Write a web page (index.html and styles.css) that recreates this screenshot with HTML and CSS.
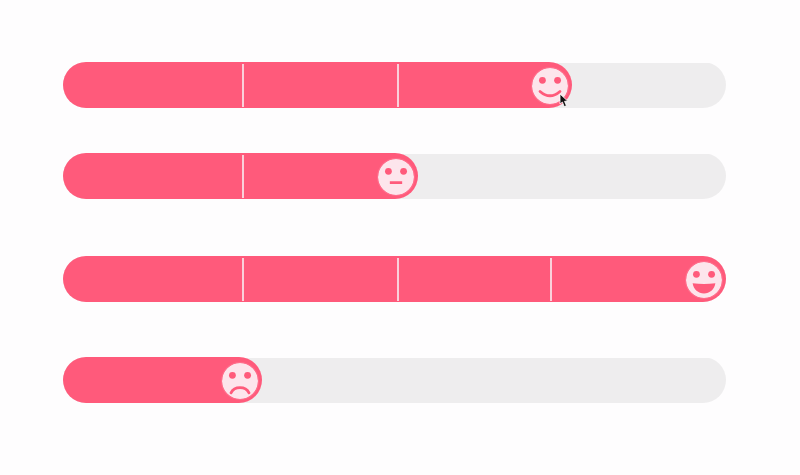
FILE: index.html
```html
<!DOCTYPE html>
<html lang="en">
<head>
    <meta charset="UTF-8">
    <title>Rating sliders</title>
    <link rel="stylesheet" href="styles.css">
</head>
<body>
    <div class="sliders">
        <div class="slider">
            <div class="fill" style="width: 509px">
                <span class="tick tick-1"></span>
                <span class="tick tick-2"></span>
                <svg class="face" viewBox="0 0 38 38">
                    <circle class="skin" cx="19" cy="19" r="19"/>
                    <circle class="eye" cx="11" cy="13" r="3.6"/>
                    <circle class="eye" cx="27" cy="13" r="3.6"/>
                    <path class="mouth" d="M8.5 24.8 Q19 34 29.5 24.8"/>
                </svg>
            </div>
            <svg class="cursor" viewBox="0 0 10 15">
                <path d="M1 1 L1 11 L3.4 9 L5.2 13.6 L7.4 12.7 L5.5 8.3 L8.6 8 Z"/>
            </svg>
        </div>

        <div class="slider">
            <div class="fill" style="width: 355px">
                <span class="tick tick-1"></span>
                <svg class="face" viewBox="0 0 38 38">
                    <circle class="skin" cx="19" cy="19" r="19"/>
                    <circle class="eye" cx="11" cy="13" r="3.6"/>
                    <circle class="eye" cx="27" cy="13" r="3.6"/>
                    <path class="mouth flat" d="M12.5 25 H25.5"/>
                </svg>
            </div>
        </div>

        <div class="slider">
            <div class="fill" style="width: 663px">
                <span class="tick tick-1"></span>
                <span class="tick tick-2"></span>
                <span class="tick tick-3"></span>
                <svg class="face" viewBox="0 0 38 38">
                    <circle class="skin" cx="19" cy="19" r="19"/>
                    <circle class="eye" cx="11" cy="13" r="3.6"/>
                    <circle class="eye" cx="27" cy="13" r="3.6"/>
                    <path class="grin" d="M7 22.5 Q19 24 31 22.5 C30 29 25 33.3 19 33.3 C13 33.3 8 29 7 22.5 Z"/>
                </svg>
            </div>
        </div>

        <div class="slider">
            <div class="fill" style="width: 199px">
                <svg class="face" viewBox="0 0 38 38">
                    <circle class="skin" cx="19" cy="19" r="19"/>
                    <circle class="eye" cx="11" cy="13" r="3.6"/>
                    <circle class="eye" cx="27" cy="13" r="3.6"/>
                    <path class="mouth" d="M9.5 31.5 C11.5 27.5 15 26 19 26 C23 26 26.5 27.5 28.5 31.5"/>
                </svg>
            </div>
        </div>
    </div>
</body>
</html>
```

FILE: styles.css
```css
body {
    margin: 0;
    background-color: #fefdfe;
    font-family: "Liberation Sans", sans-serif;
}
.sliders {
    padding: 62px 0 0 63px;
    width: 663px;
}
.slider {
    position: relative;
    height: 46px;
    margin-bottom: 45px;
    border-radius: 23px;
    background: linear-gradient(#eeedee, #eeedee) no-repeat center / 100% 45px;
}
.slider:nth-child(2) {
    margin-bottom: 57px;
}
.slider:nth-child(3) {
    margin-bottom: 55px;
}
.fill {
    position: relative;
    display: flex;
    align-items: center;
    justify-content: flex-end;
    height: 100%;
    padding: 2px 4px 0 0;
    box-sizing: border-box;
    border-radius: 23px;
    background-color: #ff5a7b;
}
.tick {
    position: absolute;
    top: 2px;
    bottom: 1px;
    width: 2px;
    background-color: #fad0da;
}
.tick-1 {
    left: 179px;
}
.tick-2 {
    left: 334px;
}
.tick-3 {
    left: 487px;
}
.face {
    width: 36px;
    height: 36px;
    flex-shrink: 0;
    border-radius: 50%;
    box-shadow: 0 0 0 1px #ff6e8c;
}
.skin {
    fill: #fde5ec;
}
.eye, .grin {
    fill: #ff5a7b;
}
.mouth {
    fill: none;
    stroke: #ff5a7b;
    stroke-width: 3;
    stroke-linecap: round;
}
.mouth.flat {
    stroke-linecap: butt;
}
.cursor {
    position: absolute;
    left: 496px;
    top: 31px;
    width: 10px;
    height: 15px;
}
.cursor path {
    fill: #111;
    stroke: #fff;
    stroke-width: 0.8;
}
```
